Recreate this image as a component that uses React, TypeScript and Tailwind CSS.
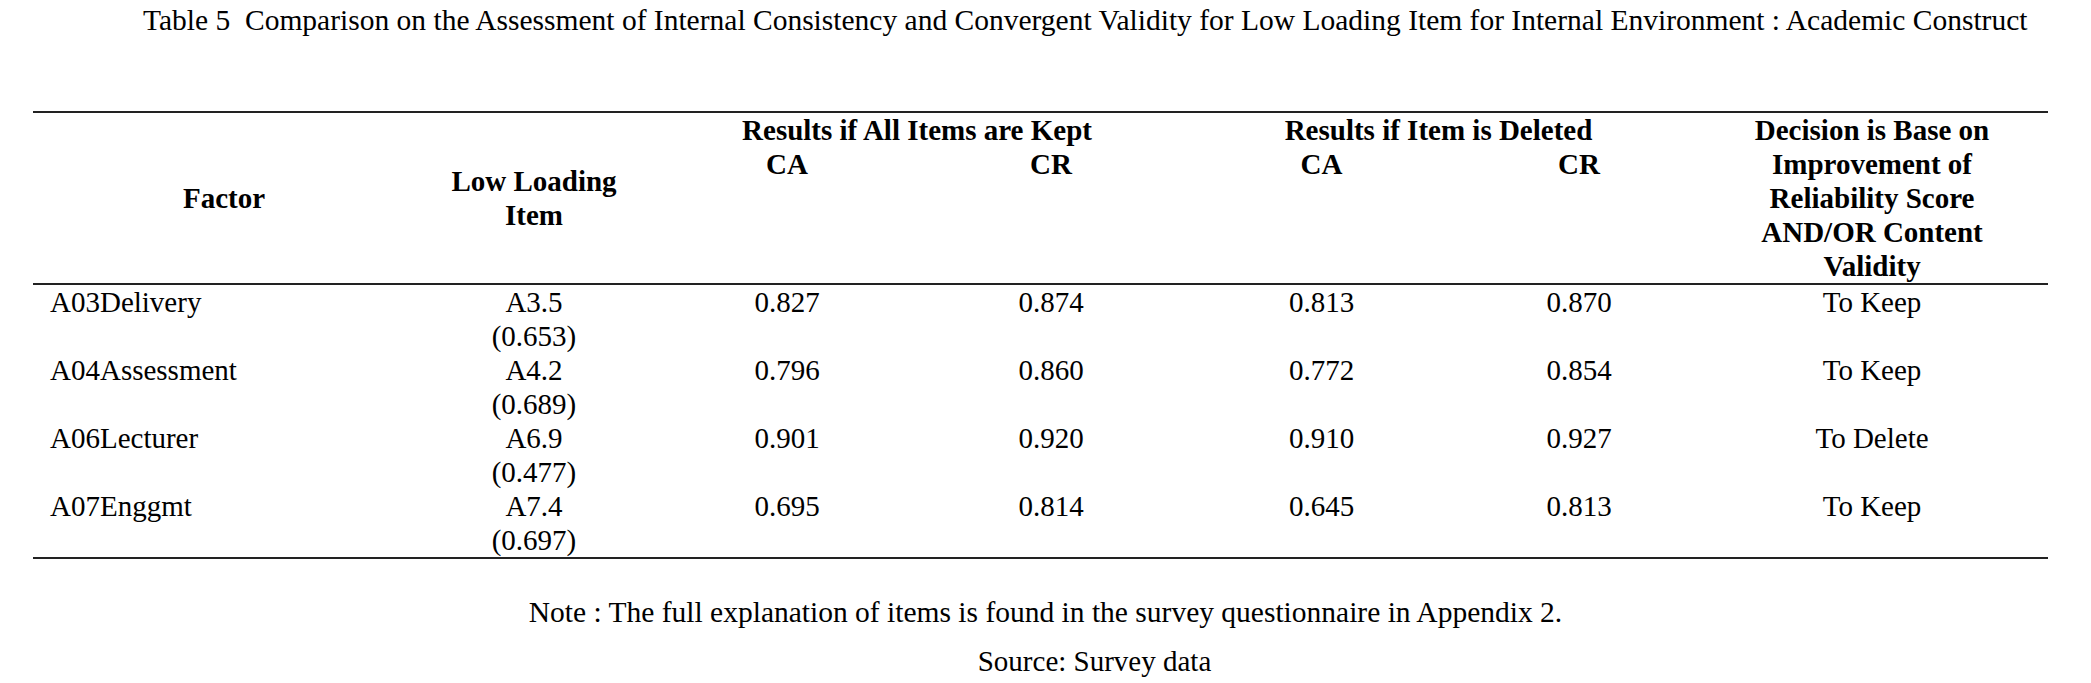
const ROWS = [
  { factor: 'A03Delivery', item: 'A3.5', loading: '(0.653)', caKept: '0.827', crKept: '0.874', caDel: '0.813', crDel: '0.870', decision: 'To Keep' },
  { factor: 'A04Assessment', item: 'A4.2', loading: '(0.689)', caKept: '0.796', crKept: '0.860', caDel: '0.772', crDel: '0.854', decision: 'To Keep' },
  { factor: 'A06Lecturer', item: 'A6.9', loading: '(0.477)', caKept: '0.901', crKept: '0.920', caDel: '0.910', crDel: '0.927', decision: 'To Delete' },
  { factor: 'A07Enggmt', item: 'A7.4', loading: '(0.697)', caKept: '0.695', crKept: '0.814', caDel: '0.645', crDel: '0.813', decision: 'To Keep' },
]

export default function App() {
  return (
    <div className="w-[2091px] h-[683px] bg-white text-black font-['Liberation_Serif',serif] overflow-hidden">
      {/* Caption */}
      <p className="pl-[143px] pt-[2px] text-[29.5px] leading-[36px] whitespace-nowrap">
        Table 5&nbsp;&nbsp;Comparison on the Assessment of Internal Consistency and Convergent Validity for Low Loading Item for Internal Environment : Academic Construct
      </p>

      <table className="ml-[33px] mt-[73px] w-[2015px] table-fixed border-collapse text-[29px] leading-[34px]">
        <colgroup>
          <col className="w-[382px]" />
          <col className="w-[238px]" />
          <col className="w-[268px]" />
          <col className="w-[260px]" />
          <col className="w-[281px]" />
          <col className="w-[234px]" />
          <col className="w-[352px]" />
        </colgroup>
        <thead className="font-bold">
          <tr className="border-t-2 border-[#222]">
            <th rowSpan={2} className="p-0 align-middle text-center font-bold">Factor</th>
            <th rowSpan={2} className="p-0 align-middle text-center font-bold">
              Low Loading
              <br />
              Item
            </th>
            <th colSpan={2} className="p-0 h-[34px] align-top text-center font-bold">Results if All Items are Kept</th>
            <th colSpan={2} className="p-0 h-[34px] align-top text-center font-bold">Results if Item is Deleted</th>
            <th rowSpan={2} className="p-0 align-middle text-center font-bold">
              Decision is Base on
              <br />
              Improvement of
              <br />
              Reliability Score
              <br />
              AND/OR Content
              <br />
              Validity
            </th>
          </tr>
          <tr className="border-b-2 border-[#222]">
            <th className="p-0 h-[136px] align-top text-center font-bold">CA</th>
            <th className="p-0 h-[136px] align-top text-center font-bold">CR</th>
            <th className="p-0 h-[136px] align-top text-center font-bold">CA</th>
            <th className="p-0 h-[136px] align-top text-center font-bold">CR</th>
          </tr>
        </thead>
        <tbody className="border-b-2 border-[#222]">
          {ROWS.map(r => (
            <tr key={r.factor} className="h-[68px]">
              <td className="p-0 pl-[17px] align-top text-left">{r.factor}</td>
              <td className="p-0 align-top text-center">
                {r.item}
                <br />
                {r.loading}
              </td>
              <td className="p-0 align-top text-center">{r.caKept}</td>
              <td className="p-0 align-top text-center">{r.crKept}</td>
              <td className="p-0 align-top text-center">{r.caDel}</td>
              <td className="p-0 align-top text-center">{r.crDel}</td>
              <td className="p-0 align-top text-center">{r.decision}</td>
            </tr>
          ))}
        </tbody>
      </table>

      {/* Footnotes */}
      <p className="mt-[36px] text-center text-[29.5px] leading-[34px]">
        Note : The full explanation of items is found in the survey questionnaire in Appendix 2.
      </p>
      <p className="mt-[15px] pl-[98px] text-center text-[29px] leading-[34px]">Source: Survey data</p>
    </div>
  )
}
